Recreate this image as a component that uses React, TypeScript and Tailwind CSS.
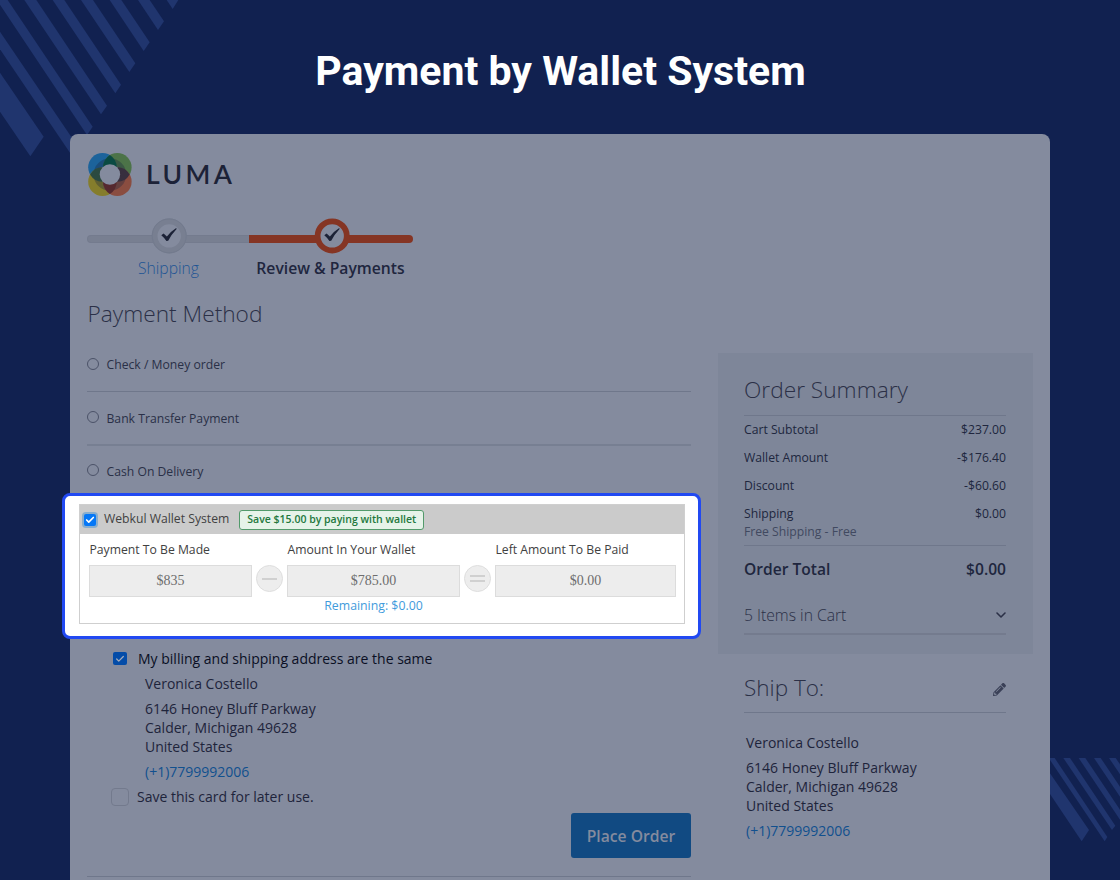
import { Check, ChevronDown } from 'lucide-react'
import { FaPencilAlt } from 'react-icons/fa'
import clsx from 'clsx'

const methods = ['Check / Money order', 'Bank Transfer Payment', 'Cash On Delivery']

const totals = [
  { label: 'Cart Subtotal', value: '$237.00' },
  { label: 'Wallet Amount', value: '-$176.40' },
  { label: 'Discount', value: '-$60.60' },
  { label: 'Shipping', value: '$0.00' },
]

function Stripes() {
  return (
    <>
      <svg className="absolute left-0 top-0" width="180" height="160" viewBox="0 0 540 480" fill="#20356e">
        <path d="M0 218L131 410L91 469L0 335Z" />
        <path d="M0 95L236 443L218 470L0 148Z" />
        <path d="M0 0H23L278 380L261 405L0 14Z" />
        <path d="M73 0H109L321 317L303 343Z" />
        <path d="M158 0H193L363 254L346 280Z" />
        <path d="M243 0H279L406 190L388 216Z" />
        <path d="M329 0H364L449 127L431 153Z" />
        <path d="M414 0H449L492 64L474 90Z" />
        <path d="M500 0H535L518 27Z" />
      </svg>
      <svg className="absolute left-[1050px] top-[758px]" width="70" height="84" viewBox="150 54 210 252" fill="#20356e">
        <path d="M150 100L267 270L245 304L150 162Z" />
        <path d="M150 54H164L322 291L314 304L150 60Z" />
        <path d="M190 54H210L346 257L336 270Z" />
        <path d="M236 54H256L360 209V239Z" />
        <path d="M282 54H302L360 140V170Z" />
        <path d="M327 54H347L360 73V103Z" />
      </svg>
    </>
  )
}

function Logo() {
  return (
    <div className="flex items-center h-11">
      <svg width="46" height="44" viewBox="0 0 46 44">
        <circle cx="15.5" cy="14.3" r="14.3" fill="#1c639b" />
        <circle cx="30.3" cy="14.3" r="14.3" fill="#4c7348" />
        <circle cx="15.5" cy="28.7" r="14.3" fill="#857d2c" />
        <circle cx="30.3" cy="28.7" r="14.3" fill="#8a4d40" />
        <circle cx="22.9" cy="21.5" r="16.3" fill="#1a2440" fillOpacity="0.35" />
        <path d="M22.9 2.1A14.3 14.3 0 0 1 22.9 26.5A14.3 14.3 0 0 1 22.9 2.1" fill="#0a4a42" />
        <path d="M3.1 21.5A14.3 14.3 0 0 1 27.9 21.5A14.3 14.3 0 0 1 3.1 21.5" fill="#2b4a40" />
        <path d="M17.9 21.5A14.3 14.3 0 0 1 42.7 21.5A14.3 14.3 0 0 1 17.9 21.5" fill="#372f3e" />
        <path d="M22.9 16.5A14.3 14.3 0 0 1 22.9 40.9A14.3 14.3 0 0 1 22.9 16.5" fill="#55292f" />
        <circle cx="22.9" cy="21.5" r="10.2" fill="#848b9e" />
      </svg>
      <span className="ml-[13px] -mt-[2px] font-['Lato',sans-serif] text-[26.5px] leading-none font-semibold tracking-[3.4px] text-[#1c2237]">LUMA</span>
    </div>
  )
}

function Step({ active }: { active?: boolean }) {
  return (
    <div className="grid h-[35px] w-[163px] items-center justify-items-center">
      <div
        className={clsx(
          'col-start-1 row-start-1 mt-[6px] h-[8px]',
          active
            ? '-ml-px w-[164px] rounded-r-full bg-[#853524]'
            : 'w-full rounded-l-full border border-r-0 border-[#747b8e] bg-[#787f91]',
        )}
      />
      <svg className="col-start-1 row-start-1" width="36" height="36" viewBox="0 0 36 36">
        <circle
          cx="18.2"
          cy="17.9"
          r="14.6"
          fill="#848b9e"
          stroke={active ? '#853524' : '#787f91'}
          strokeWidth="5.8"
        />
        {!active && <circle cx="18.2" cy="17.9" r="17" fill="none" stroke="#727a8d" />}
        <path d="M10.3 17.2L12.6 15.6L15.9 18.6Q20 13.2 25.2 10L25.6 11Q20.4 16.4 17.2 22.8L15.4 23Q13 19.4 10.3 17.2Z" fill="#1c2237" />
      </svg>
    </div>
  )
}

function Sign({ equal }: { equal?: boolean }) {
  return (
    <div className="mx-[4px] mt-[22px] flex h-[27px] w-[27px] flex-col items-center justify-center gap-[3px] rounded-full border border-[#dedede] bg-[#ededed]">
      <span className="h-[2px] w-[15px] bg-[#d0d0d0]" />
      {equal && <span className="h-[2px] w-[15px] bg-[#d0d0d0]" />}
    </div>
  )
}

function Amount({ label, value, note, className }: { label: string; value: string; note?: string; className: string }) {
  return (
    <div className={className}>
      <div className="h-[22px] whitespace-nowrap pl-[0.5px] text-[12.2px] leading-[14px] text-[#414141]">{label}</div>
      <div className="flex h-[32px] items-center justify-center border border-[#dcdcdc] bg-[#ededed] pb-[2px] font-['Liberation_Serif',serif] text-[14px] text-[#6e6e6e]">
        {value}
      </div>
      {note && <div className="text-center text-[12.3px] leading-[17px] text-[#3f9bdc]">{note}</div>}
    </div>
  )
}

function WalletBox() {
  return (
    <div className="relative -mt-[3px] -ml-[25px] h-[146px] w-[639px] rounded-lg border-[3px] border-[#2149f2] bg-white pt-[8px] pl-[14px]">
      <div className="h-[120px] w-[606px] border border-[#cfcfcf]">
        <div className="flex h-[29px] items-center bg-[#cbcbcb] pl-[4px]">
          <span className="flex h-[12px] w-[12px] items-center justify-center rounded-[2px] bg-[#0577f6] ring-2 ring-[#5e9bd0]/60">
            <Check size={10} strokeWidth={4} className="text-white" />
          </span>
          <span className="ml-[8px] whitespace-nowrap pb-px text-[12.2px] leading-none text-[#414141]">Webkul Wallet System</span>
          <span className="ml-[10px] flex h-[20px] w-[185px] items-center justify-center rounded-[3px] border border-[#529a6b] bg-[#e6f3e9] whitespace-nowrap text-[10.5px] font-semibold text-[#23783d]">
            Save $15.00 by paying with wallet
          </span>
        </div>
        <div className="flex pt-[9px] pl-[9px]">
          <Amount className="w-[163px]" label="Payment To Be Made" value="$835" />
          <Sign />
          <Amount className="w-[173px]" label="Amount In Your Wallet" value="$785.00" note="Remaining: $0.00" />
          <Sign equal />
          <Amount className="w-[181px]" label="Left Amount To Be Paid" value="$0.00" />
        </div>
      </div>
    </div>
  )
}

function Address({ className }: { className?: string }) {
  return (
    <div className={clsx('text-[14px] leading-[19px] text-[#1e243b]', className)}>
      <p>Veronica Costello</p>
      <p className="mt-[6px]">6146 Honey Bluff Parkway</p>
      <p>Calder, Michigan 49628</p>
      <p>United States</p>
      <p className="mt-[6px] text-[#11508e]">(+1)7799992006</p>
    </div>
  )
}

function OrderSummary() {
  return (
    <aside className="ml-[27px] w-[315px] pt-[219px]">
      <div className="h-[301px] bg-[#7e8699] pr-[27px] pl-[26px] pt-[21px]">
        <h2 className="h-[41px] text-[22.7px] leading-[32px] font-light text-[#2b3047]">Order Summary</h2>
        <div className="h-[131px] border-y border-[#6f778b] text-[12.2px] text-[#20263e]">
          {totals.map(t => (
            <div key={t.label} className="flex h-[28px] items-center justify-between">
              <span>{t.label}</span>
              <span>{t.value}</span>
            </div>
          ))}
          <div className="-mt-[5px] leading-[18px] text-[#414960]">Free Shipping - Free</div>
        </div>
        <div className="flex h-[46px] items-center justify-between pt-[2px] text-[15.6px] font-semibold text-[#20263e]">
          <span>Order Total</span>
          <span>$0.00</span>
        </div>
        <div className="flex h-[43px] items-center justify-between border-b-2 border-[#747b8e] pt-[6px] text-[15.7px] font-light text-[#2b3047]">
          <span>5 Items in Cart</span>
          <ChevronDown size={16} strokeWidth={2.4} className="-mt-px -mr-[3px]" />
        </div>
      </div>
      <div className="pr-[27px] pl-[26px]">
        <div className="flex h-[59px] items-center justify-between border-b border-[#6f778b] pt-[9px] text-[#2b3047]">
          <h2 className="text-[22.5px] leading-[32px] font-light">Ship To:</h2>
          <FaPencilAlt size={13} className="mt-[3px] text-[#3a4057]" />
        </div>
        <Address className="mt-[20px] ml-[2px]" />
      </div>
    </aside>
  )
}

export default function App() {
  return (
    <div className="relative h-[880px] w-[1120px] overflow-hidden bg-[#112150] font-['Open_Sans','Noto_Sans',sans-serif]">
      <Stripes />
      <h1 className="h-[134px] pt-[46px] pl-px text-center font-['Roboto',sans-serif] text-[41px] leading-[50px] font-bold text-white">
        Payment by Wallet System
      </h1>

      <div className="relative mx-[70px] flex h-[746px] rounded-t-lg bg-[#848b9e] pl-[17px]">
        <main className="w-[604px] pt-[19px]">
          <Logo />

          {/* Checkout progress */}
          <div className="mt-[21px] flex">
            <Step />
            <Step active />
          </div>
          <div className="mt-[5px] flex text-center text-[15.7px] leading-[20px]">
            <span className="w-[163px] font-light text-[#1f5594]">Shipping</span>
            <span className="w-[161px] whitespace-nowrap font-semibold text-[#20263e]">Review &amp; Payments</span>
          </div>

          <h2 className="mt-[20px] pl-[0.5px] text-[22.7px] leading-[32px] font-light text-[#2b3047]">Payment Method</h2>

          <div className="mt-[8px] text-[12.2px] text-[#2a3047]">
            {methods.map((m, i) => (
              <div
                key={m}
                className={clsx(
                  'flex items-center',
                  i === 0 && 'h-[54px] border-b border-[#6f778b]',
                  i === 1 && 'h-[54px] border-b-2 border-[#777f92]',
                  i === 2 && 'h-[50px]',
                )}
              >
                <span className="mb-[2px] h-[12px] w-[12px] rounded-full border border-[#4b5268]" />
                <span className="ml-[7.5px] pt-[2px]">{m}</span>
              </div>
            ))}
          </div>

          <WalletBox />

          {/* Billing address */}
          <div className="pt-[10px] text-[14px] leading-[19px]">
            <div className="flex items-center pl-[26px] text-[#0a0f24]">
              <span className="flex h-[13px] w-[14px] items-center justify-center rounded-[2px] bg-[#044ca8]">
                <Check size={10} strokeWidth={3} className="text-[#a5acbb]" />
              </span>
              <span className="ml-[11px]">My billing and shipping address are the same</span>
            </div>
            <Address className="mt-[6px] ml-[58px]" />
            <div className="mt-[6px] flex items-center pl-[24px] text-[#1e243b]">
              <span className="h-[18px] w-[18px] rounded-[4px] border border-[#737a8d]" />
              <span className="ml-[8px]">Save this card for later use.</span>
            </div>
          </div>

          <div className="mt-[7px] flex justify-end border-b border-[#6f778b] pb-[18px]">
            <button className="h-[45px] w-[120px] rounded-[3px] bg-[#114a82] pt-[2px] text-[15.7px] font-semibold text-[#848b9e]">
              Place Order
            </button>
          </div>
        </main>

        <OrderSummary />
      </div>
    </div>
  )
}
